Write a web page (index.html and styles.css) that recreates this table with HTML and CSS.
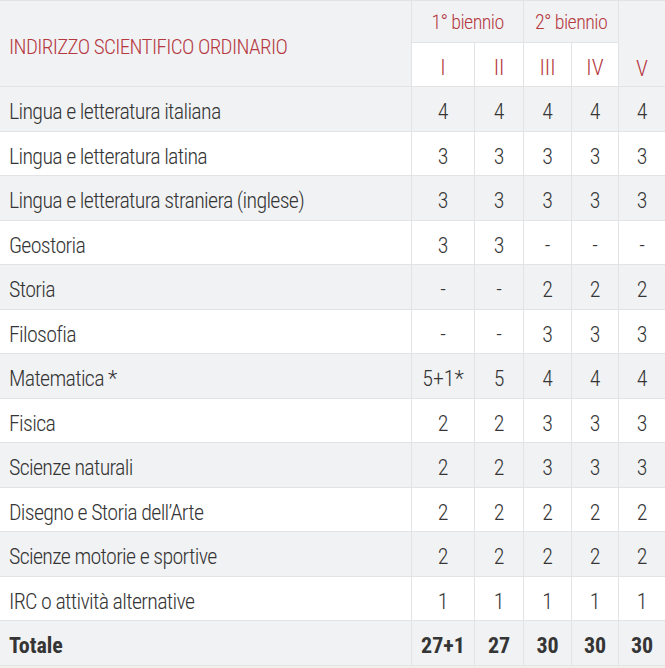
FILE: index.html
```html
<!DOCTYPE html>
<html lang="it">
<head>
<meta charset="utf-8">
<link rel="stylesheet" href="styles.css">
</head>
<body>
<div class="orario">
  <div class="hd title">INDIRIZZO SCIENTIFICO ORDINARIO</div>
  <div class="hd group">1° biennio</div>
  <div class="hd group">2° biennio</div>
  <div class="hd year v">V</div>
  <div class="hd year white">I</div>
  <div class="hd year white">II</div>
  <div class="hd year white">III</div>
  <div class="hd year white">IV</div>

  <div class="row gray"><div class="cell subject">Lingua e letteratura italiana</div><div class="cell">4</div><div class="cell">4</div><div class="cell">4</div><div class="cell">4</div><div class="cell">4</div></div>
  <div class="row"><div class="cell subject">Lingua e letteratura latina</div><div class="cell">3</div><div class="cell">3</div><div class="cell">3</div><div class="cell">3</div><div class="cell">3</div></div>
  <div class="row gray"><div class="cell subject">Lingua e letteratura straniera (inglese)</div><div class="cell">3</div><div class="cell">3</div><div class="cell">3</div><div class="cell">3</div><div class="cell">3</div></div>
  <div class="row"><div class="cell subject">Geostoria</div><div class="cell">3</div><div class="cell">3</div><div class="cell">-</div><div class="cell">-</div><div class="cell">-</div></div>
  <div class="row gray"><div class="cell subject">Storia</div><div class="cell">-</div><div class="cell">-</div><div class="cell">2</div><div class="cell">2</div><div class="cell">2</div></div>
  <div class="row"><div class="cell subject">Filosofia</div><div class="cell">-</div><div class="cell">-</div><div class="cell">3</div><div class="cell">3</div><div class="cell">3</div></div>
  <div class="row gray"><div class="cell subject">Matematica *</div><div class="cell">5+1*</div><div class="cell">5</div><div class="cell">4</div><div class="cell">4</div><div class="cell">4</div></div>
  <div class="row"><div class="cell subject">Fisica</div><div class="cell">2</div><div class="cell">2</div><div class="cell">3</div><div class="cell">3</div><div class="cell">3</div></div>
  <div class="row gray"><div class="cell subject">Scienze naturali</div><div class="cell">2</div><div class="cell">2</div><div class="cell">3</div><div class="cell">3</div><div class="cell">3</div></div>
  <div class="row"><div class="cell subject">Disegno e Storia dell’Arte</div><div class="cell">2</div><div class="cell">2</div><div class="cell">2</div><div class="cell">2</div><div class="cell">2</div></div>
  <div class="row gray"><div class="cell subject">Scienze motorie e sportive</div><div class="cell">2</div><div class="cell">2</div><div class="cell">2</div><div class="cell">2</div><div class="cell">2</div></div>
  <div class="row"><div class="cell subject">IRC o attività alternative</div><div class="cell">1</div><div class="cell">1</div><div class="cell">1</div><div class="cell">1</div><div class="cell">1</div></div>
  <div class="row gray total"><div class="cell subject">Totale</div><div class="cell">27+1</div><div class="cell">27</div><div class="cell">30</div><div class="cell">30</div><div class="cell">30</div></div>
</div>
</body>
</html>
```
FILE: styles.css
```css
html, body {
  margin: 0;
  padding: 0;
  background: #f4efed;
}
.orario {
  width: 665px;
  display: grid;
  grid-template-columns: 411px 63px 49px 48px 47px 47px;
  grid-template-rows: 42px 44px;
  grid-auto-rows: 44.5px;
  background: #ffffff;
  border-bottom: 1px solid #e2e3e5;
  font-family: "Roboto Condensed", Roboto, sans-serif;
  font-stretch: condensed;
  font-weight: 300;
  font-size: 22px;
  color: #353535;
}
.row {
  display: contents;
}
.hd, .cell {
  box-sizing: border-box;
  display: flex;
  align-items: center;
  justify-content: center;
  border-top: 1px solid #e2e3e5;
  border-left: 1px solid #e2e3e5;
  white-space: nowrap;
  font-family: "Roboto Condensed", Roboto, sans-serif;
  font-stretch: condensed;
  font-weight: 300;
  font-size: 22px;
}
.hd {
  color: #b5393f;
  background: #f1f2f4;
}
.hd.title {
  grid-row: span 2;
  justify-content: flex-start;
  padding: 7px 0 0 9px;
  font-size: 21px;
  letter-spacing: -0.6px;
}
.hd.group {
  grid-column: span 2;
  padding-top: 1px;
  font-size: 20px;
  letter-spacing: -0.6px;
}
.hd.year {
  padding-top: 6px;
}
.hd.v {
  grid-row: span 2;
  padding-top: 50px;
}
.hd.white {
  background: #ffffff;
}
.hd.title {
  border-left: none;
}
.cell {
  padding-top: 6px;
  color: #353535;
}
.cell.subject {
  justify-content: flex-start;
  padding-left: 9px;
  border-left: none;
  letter-spacing: -0.7px;
}
.row.gray .cell {
  background: #f1f2f4;
}
.row.total .cell {
  font-weight: 700;
  letter-spacing: 0;
}
```
